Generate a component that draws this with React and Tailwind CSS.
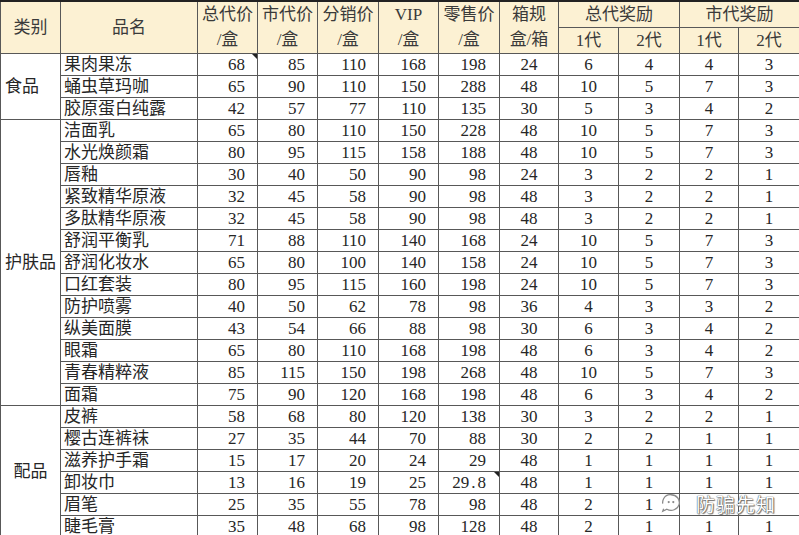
import React from "react";

const groups = [
  {
    cat: "食品",
    align: "left",
    rows: [
      ["果肉果冻", 68, 85, 110, 168, 198, 24, 6, 4, 4, 3],
      ["蛹虫草玛咖", 65, 90, 110, 150, 288, 48, 10, 5, 7, 3],
      ["胶原蛋白纯露", 42, 57, 77, 110, 135, 30, 5, 3, 4, 2],
    ],
  },
  {
    cat: "护肤品",
    align: "left",
    rows: [
      ["洁面乳", 65, 80, 110, 150, 228, 48, 10, 5, 7, 3],
      ["水光焕颜霜", 80, 95, 115, 158, 188, 48, 10, 5, 7, 3],
      ["唇釉", 30, 40, 50, 90, 98, 24, 3, 2, 2, 1],
      ["紧致精华原液", 32, 45, 58, 90, 98, 48, 3, 2, 2, 1],
      ["多肽精华原液", 32, 45, 58, 90, 98, 48, 3, 2, 2, 1],
      ["舒润平衡乳", 71, 88, 110, 140, 168, 24, 10, 5, 7, 3],
      ["舒润化妆水", 65, 80, 100, 140, 158, 24, 10, 5, 7, 3],
      ["口红套装", 80, 95, 115, 160, 198, 24, 10, 5, 7, 3],
      ["防护喷雾", 40, 50, 62, 78, 98, 36, 4, 3, 3, 2],
      ["纵美面膜", 43, 54, 66, 88, 98, 30, 6, 3, 4, 2],
      ["眼霜", 65, 80, 110, 168, 198, 48, 6, 3, 4, 2],
      ["青春精粹液", 85, 115, 150, 198, 268, 48, 10, 5, 7, 3],
      ["面霜", 75, 90, 120, 168, 198, 48, 6, 3, 4, 2],
    ],
  },
  {
    cat: "配品",
    align: "center",
    rows: [
      ["皮裤", 58, 68, 80, 120, 138, 30, 3, 2, 2, 1],
      ["樱古连裤袜", 27, 35, 44, 70, 88, 30, 2, 2, 1, 1],
      ["滋养护手霜", 15, 17, 20, 24, 29, 48, 1, 1, 1, 1],
      ["卸妆巾", 13, 16, 19, 25, "29.8", 48, 1, 1, 1, 1],
      ["眉笔", 25, 35, 55, 78, 98, 48, 2, 1, "", ""],
      ["睫毛膏", 35, 48, 68, 98, 128, 48, 2, 1, 1, 1],
    ],
  },
];

const widths = [60, 137, 60, 60, 61, 60, 61, 59, 60, 61, 59, 61];

const B = "border border-[#585858]";
const H = `${B} bg-[#fcf1d3] text-[#3a3a3a] font-normal p-0 text-center align-middle`;

function Tri() {
  return (
    <span className="absolute right-0 top-0 w-0 h-0 border-l-[5px] border-l-transparent border-t-[5px] border-t-[#222]" />
  );
}

function Watermark() {
  return (
    <div className="absolute left-[658px] top-[492px] flex items-center gap-[12px] pointer-events-none">
      <svg width="26" height="22" viewBox="0 0 26 24" fill="none">
        <path
          d="M13 3a9 8.5 0 1 1-4.5 15.8L4 21l1.6-4.4A8.5 8.5 0 0 1 13 3z"
          stroke="#8a8a8a"
          strokeWidth="1.4"
          fill="#ffffff"
          strokeDasharray="40 6"
        />
        <circle cx="10.5" cy="11" r="1.2" fill="#888" />
        <circle cx="15.5" cy="11" r="1.2" fill="#888" />
      </svg>
      <span
        className="text-[19px] leading-none text-white tracking-[1px] [text-shadow:0_0_1px_#555,0_0_1px_#555,1px_1px_1px_#777]"
        style={{ fontFamily: '"Noto Sans CJK SC", sans-serif' }}
      >
        防骗先知
      </span>
    </div>
  );
}

export default function App() {
  const numCell = (v, i, key, tri) => {
    const right = i <= 5;
    const pr = i === 5 ? "pr-[13px]" : "pr-[12px]";
    return (
      <td
        key={key}
        className={`${B} p-0 align-middle relative ${right ? `text-right ${pr}` : "text-center"}`}
      >
        {tri && <Tri />}
        {v === "29.8" ? (
          <span>
            29<span className="px-[2px]">.</span>8
          </span>
        ) : (
          v
        )}
      </td>
    );
  };

  return (
    <div
      className="relative w-[799px] h-[535px] overflow-hidden bg-white text-[#262626]"
      style={{ fontFamily: '"Liberation Serif", "Noto Sans CJK SC", serif' }}
    >
      <table className="table-fixed border-collapse w-[799px] text-[17px] leading-none border-t-2 border-t-[#222]">
        <colgroup>
          {widths.map((w, i) => (
            <col key={i} style={{ width: w }} />
          ))}
        </colgroup>
        <thead>
          <tr className="h-[26px]">
            <th rowSpan={2} className={`${H} border-t-2 border-t-[#222]`}>类别</th>
            <th rowSpan={2} className={`${H} border-t-2 border-t-[#222]`}>品名</th>
            {["总代价", "市代价", "分销价", "VIP", "零售价", "箱规"].map((t, i) => (
              <th key={t} rowSpan={2} className={`${H} border-t-2 border-t-[#222]`}>
                <div className="leading-[25px]">{t}</div>
                <div className="leading-[25px]">{i === 5 ? "盒/箱" : "/盒"}</div>
              </th>
            ))}
            <th colSpan={2} className={`${H} border-t-2 border-t-[#222]`}>总代奖励</th>
            <th colSpan={2} className={`${H} border-t-2 border-t-[#222]`}>市代奖励</th>
          </tr>
          <tr className="h-[26px]">
            <th className={H}>1代</th>
            <th className={H}>2代</th>
            <th className={H}>1代</th>
            <th className={H}>2代</th>
          </tr>
        </thead>
        <tbody>
          {groups.map((g) =>
            g.rows.map((r, ri) => (
              <tr key={r[0]} className="h-[22px]">
                {ri === 0 && (
                  <td
                    rowSpan={g.rows.length}
                    className={`${B} p-0 align-middle ${g.align === "left" ? "text-left pl-[4px]" : "text-center"}`}
                  >
                    {g.cat}
                  </td>
                )}
                <td className={`${B} p-0 pl-[3px] align-middle text-left whitespace-nowrap`}>{r[0]}</td>
                {r.slice(1).map((v, i) =>
                  numCell(
                    v,
                    i + 1,
                    i,
                    (r[0] === "果肉果冻" && i === 0) || (r[0] === "卸妆巾" && i === 4)
                  )
                )}
              </tr>
            ))
          )}
        </tbody>
      </table>
      <Watermark />
    </div>
  );
}
